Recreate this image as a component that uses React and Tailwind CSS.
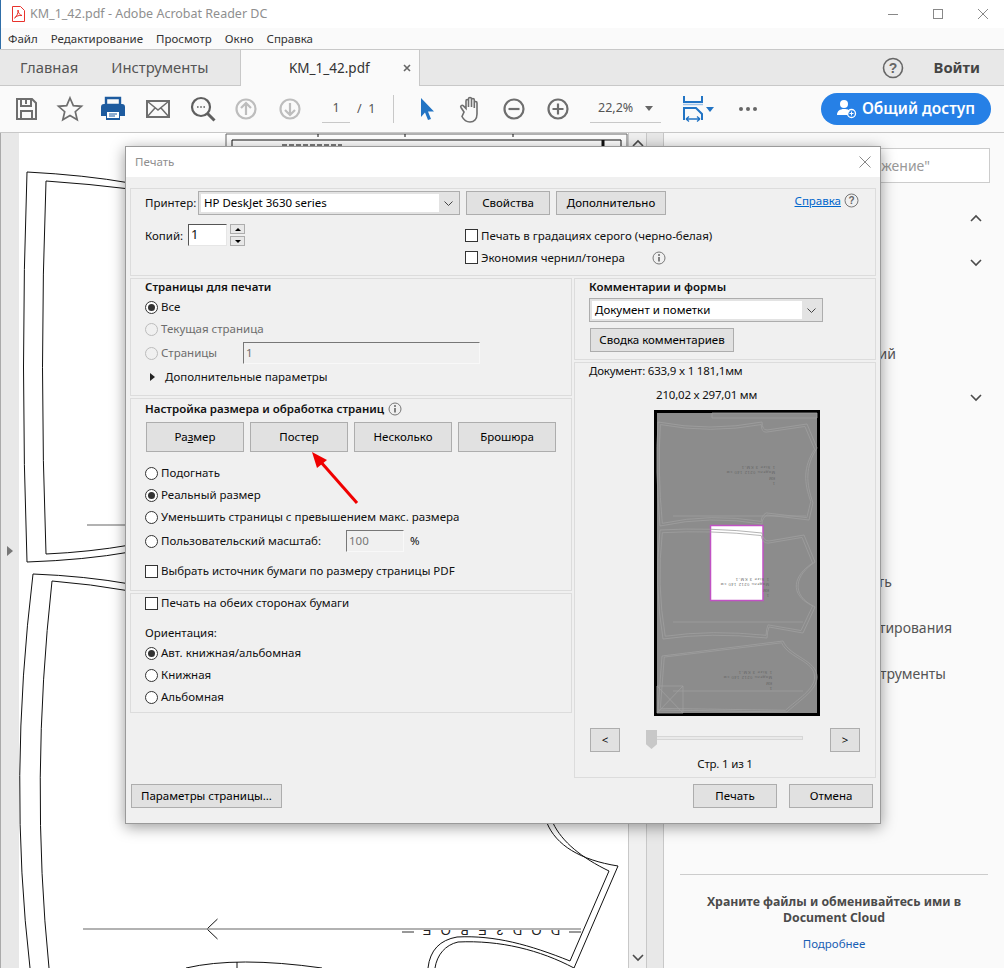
import React from 'react'

const Radio = ({ checked, disabled }) => (
    <span className={`flex h-[13px] w-[13px] shrink-0 items-center justify-center rounded-full border ${disabled ? 'border-[#bcbcbc] bg-[#f0f0f0]' : 'border-[#333] bg-white'}`}>
        {checked && <span className="h-[7px] w-[7px] rounded-full bg-[#333]" />}
    </span>
)

const Check = () => <span className="h-[13px] w-[13px] shrink-0 border border-[#333] bg-white" />

const Btn = ({ className = '', children }) => (
    <div className={`flex h-[24px] items-center justify-center border border-[#adadad] bg-[#e1e1e1] text-black ${className}`}>
        {children}
    </div>
)

const Row = ({ className = '', children }) => (
    <div className={`flex h-[22px] items-center gap-[3px] ${className}`}>{children}</div>
)

const Chevron = ({ className = '', up }) => (
    <svg width="12" height="8" viewBox="0 0 12 8" className={className}>
        <path d={up ? 'M1 7l5-5 5 5' : 'M1 1l5 5 5-5'} fill="none" stroke="#4b4b4b" strokeWidth="1.6" />
    </svg>
)

const Select = ({ value, className = '' }) => (
    <div className={`flex h-[24px] border border-[#adadad] bg-[#e3e3e3] p-[2px] ${className}`}>
        <div className="flex flex-1 items-center bg-white pl-[3px] text-black">{value}</div>
        <div className="flex w-[18px] items-center justify-center">
            <svg width="9" height="5" viewBox="0 0 9 5"><path d="M.5.5l4 4 4-4" fill="none" stroke="#444" /></svg>
        </div>
    </div>
)

const InfoIcon = ({ className = '' }) => (
    <svg width="14" height="14" viewBox="0 0 14 14" className={className}>
        <circle cx="7" cy="7" r="6" fill="none" stroke="#777" />
        <circle cx="7" cy="4" r="1" fill="#666" />
        <path d="M7 6v4.5" stroke="#666" strokeWidth="1.6" />
    </svg>
)

const ToolIcon = ({ children, w = 28, h = 28, className = '' }) => (
    <svg width={w} height={h} viewBox={`0 0 ${w} ${h}`} className={`shrink-0 ${className}`}>{children}</svg>
)

const Toolbar = () => (
    <div className="flex h-[47px] items-center border-b border-[#c8c8c8] bg-[#fafafa] pl-[12px] text-[12.5px] text-[#555]">
        <ToolIcon>
            <path d="M5 4h15l4 4v16H5z" fill="none" stroke="#6e6e6e" strokeWidth="2" />
            <path d="M9 4v7h10V4M9 24v-8h11v8M14 5v4" fill="none" stroke="#6e6e6e" strokeWidth="2" />
        </ToolIcon>
        <ToolIcon className="ml-[16px]">
            <path d="M14 3l3.3 7.6 8.2.7-6.2 5.4 1.9 8L14 20.5l-7.2 4.2 1.9-8-6.2-5.4 8.2-.7z" fill="none" stroke="#6e6e6e" strokeWidth="1.7" />
        </ToolIcon>
        <ToolIcon className="ml-[15px]">
            <path d="M7 3h14v7H7z" fill="none" stroke="#1d5b9f" strokeWidth="2.4" />
            <path d="M2 12a3 3 0 013-3h18a3 3 0 013 3v9h-5v4H7v-4H2z" fill="#1d5b9f" />
            <path d="M8 17h12v6H8z" fill="#fff" />
            <path d="M10 19h8M10 21h6" stroke="#1d5b9f" />
        </ToolIcon>
        <ToolIcon className="ml-[17px]">
            <path d="M3 6h22v16H3z" fill="none" stroke="#6e6e6e" strokeWidth="2" />
            <path d="M3 6l11 9 11-9M3 22l8-9M25 22l-8-9" fill="none" stroke="#6e6e6e" strokeWidth="1.5" />
        </ToolIcon>
        <ToolIcon className="ml-[17px]">
            <circle cx="12" cy="12" r="9" fill="none" stroke="#5f5f5f" strokeWidth="2.2" />
            <path d="M18.5 18.5l7 7" stroke="#5f5f5f" strokeWidth="3" />
            <path d="M8 12h1.6M11.2 12h1.6M14.4 12h1.6" stroke="#5f5f5f" strokeWidth="1.6" />
        </ToolIcon>
        <ToolIcon className="ml-[15px]">
            <circle cx="14" cy="14" r="9.5" fill="none" stroke="#bdbdbd" strokeWidth="2.2" />
            <path d="M14 20V8.5M9 13l5-5 5 5" fill="none" stroke="#bdbdbd" strokeWidth="2.2" />
        </ToolIcon>
        <ToolIcon className="ml-[16px]">
            <circle cx="14" cy="14" r="9.5" fill="none" stroke="#bdbdbd" strokeWidth="2.2" />
            <path d="M14 8v11.5M9 15l5 5 5-5" fill="none" stroke="#bdbdbd" strokeWidth="2.2" />
        </ToolIcon>
        <div className="ml-[18px] flex h-[28px] w-[28px] items-center justify-center border-b border-[#c8c8c8] text-[#555]">1</div>
        <div className="ml-[7px] w-[15px] whitespace-nowrap">/&nbsp;&nbsp;1</div>
        <div className="ml-[21px] h-[28px] w-px bg-[#c8c8c8]" />
        <ToolIcon w={20} className="ml-[23px]">
            <path d="M4 3l13 13.5h-6l3 7.5-3 1-3-7.5L4 22z" fill="#2274c4" />
        </ToolIcon>
        <ToolIcon className="ml-[20px]">
            <path d="M7 17l-3-4.5c-1-1.6 1-3 2.4-1.6L9 13.5V6c0-2 2.5-2 2.5 0v6-8c0-2 3-2 3 0v8-7c0-2 2.8-2 2.8 0v8-5c0-2 2.7-2 2.7 0v11c0 5-3 8-7 8-4 0-6-1.5-8-5.5z" fill="none" stroke="#6e6e6e" strokeWidth="1.6" />
        </ToolIcon>
        <ToolIcon className="ml-[15px]">
            <circle cx="14" cy="14" r="9.5" fill="none" stroke="#6e6e6e" strokeWidth="2.2" />
            <path d="M8.5 14h11" stroke="#6e6e6e" strokeWidth="2.2" />
        </ToolIcon>
        <ToolIcon className="ml-[16px]">
            <circle cx="14" cy="14" r="9.5" fill="none" stroke="#6e6e6e" strokeWidth="2.2" />
            <path d="M8.5 14h11M14 8.5v11" stroke="#6e6e6e" strokeWidth="2.2" />
        </ToolIcon>
        <div className="ml-[18px] flex h-[28px] w-[71px] items-center border-b border-[#c8c8c8] pl-[8px]">
            <span className="w-[47px]">22,2%</span>
            <span className="h-0 w-0 border-x-[4px] border-t-[5px] border-x-transparent border-t-[#666]" />
        </div>
        <ToolIcon w={24} className="ml-[20px]">
            <path d="M3 1v6h18V1" fill="none" stroke="#2274c4" strokeWidth="2" />
            <path d="M2 9.5h20" stroke="#9fc3e8" strokeWidth="1.5" />
            <path d="M3 25V13h12l6 6v6" fill="none" stroke="#2274c4" strokeWidth="2" />
            <path d="M5 24h14M5 24l3-2.5M5 24l3 2.5M19 24l-3-2.5M19 24l-3 2.5" fill="none" stroke="#2274c4" strokeWidth="1.3" />
        </ToolIcon>
        <span className="ml-[1px] h-0 w-0 border-x-[4px] border-t-[5px] border-x-transparent border-t-[#2274c4]" />
        <div className="ml-[25px] flex gap-[3px]">
            <span className="h-[4px] w-[4px] rounded-full bg-[#666]" />
            <span className="h-[4px] w-[4px] rounded-full bg-[#666]" />
            <span className="h-[4px] w-[4px] rounded-full bg-[#666]" />
        </div>
        <div className="ml-[64px] flex h-[32px] w-[170px] items-center justify-center gap-[5px] rounded-full bg-[#2680e6] text-[15.5px] font-semibold text-white">
            <svg width="20" height="20" viewBox="0 0 20 20">
                <circle cx="7" cy="5" r="4" fill="#fff" />
                <path d="M0 16c0-4 3-6 7-6s5 1 6 2a5 5 0 00-2 4z" fill="#fff" />
                <circle cx="14.5" cy="14.5" r="4" fill="none" stroke="#fff" strokeWidth="1.3" />
                <path d="M12.5 14.5h4M14.5 12.5v4" stroke="#fff" />
            </svg>
            <span>Общий доступ</span>
        </div>
    </div>
)

const PdfDrawing = () => (
    <svg viewBox="19 133 609 835" className="block h-full w-full">
        <defs>
            <clipPath id="labelClip"><rect x="390" y="930" width="195" height="12" /></clipPath>
        </defs>
        <g fill="none" stroke="#111" strokeWidth="1">
            <path d="M226 146V134H627V146" stroke="#666" />
            <path d="M318 134v3M405 134v3M513 134v3" />
            <path d="M232 146V140H621V146" />
            <path d="M603 140v6" strokeWidth="3" />
            <path d="M282 145h60" strokeWidth="1.5" strokeDasharray="5 2" stroke="#555" />
            <path d="M27 172Q85 175 130 183" />
            <path d="M27 172Q20 367 27 562" />
            <path d="M27 562Q85 560 130 552" />
            <path d="M46 181Q90 184 130 189" />
            <path d="M46 181Q39 367 46 554" />
            <path d="M46 554Q90 552 130 545" />
            <path d="M33 574Q85 576 130 584" />
            <path d="M33 574Q8 780 30 968" />
            <path d="M52 581Q90 584 130 591" />
            <path d="M52 581Q30 780 49 968" />
            <path d="M547 823C556 845 580 860 618 866L574 968" />
            <path d="M553 823C562 842 582 858 609 871L570 961C530 945 495 935 457 937C440 940 430 950 428 968" />
            <path d="M574 968C540 950 500 940 458 942C445 945 437 955 435 968" />
            <path d="M186 968Q237 956 322 968" />
            <path d="M237 962v6" />
            <path d="M217.5 919L207 929L217.5 939" />
        </g>
        <path d="M87 525H130M83 929H581" stroke="#999" strokeWidth="1.5" />
        <path d="M402 932h12M569 932h12" stroke="#777" strokeWidth="1.5" />
        <g clipPath="url(#labelClip)">
            <text transform="rotate(180 494 926)" x="414" y="926" fontSize="13" textLength="165" fontFamily="Liberation Sans, sans-serif" fill="#222">-DOD3EBOE-</text>
        </g>
    </svg>
)

const labelGroups = [
    { right: 775, top: 466 },
    { right: 769, top: 578 },
    { right: 772, top: 671 },
]

// pattern pieces of the preview page, drawn double as on the real sheet
const previewPieces = [
    { d: 'M658 422Q710 432 762 422Q762 430 767 430L807 424L817 448C805 467 806 483 813 503L809 520L767 515Q762 518 762 524Q710 515 660 526Q655 470 658 422z', cx: 737, cy: 473 },
    { d: 'M660 530Q710 527 762 533Q763 541 769 541L804 535L815 562C795 575 790 595 815 607L803 633L769 627Q767 632 767 638Q710 632 663 639Q654 585 660 530z', cx: 737, cy: 584 },
    { d: 'M783 641L662 656L658 710L787 712C800 700 817 690 817 677C817 660 790 657 783 641z', cx: 737, cy: 677 },
]

const PreviewDrawing = () => (
    <svg viewBox="654 410 166 306" className="block h-[306px] w-[166px]">
        <rect x="655.5" y="411.5" width="163" height="303" fill="#8c8c8c" stroke="#000" strokeWidth="3" />
        <rect x="710.5" y="525.5" width="52.5" height="75" fill="#fff" stroke="#c152c4" strokeWidth="1.5" />
        <g fill="none" stroke="#a0a0a0" strokeWidth="0.8">
            <path d="M712 413h105v5H712z" />
            {previewPieces.map((p) => (
                <g key={p.cy}>
                    <path d={p.d} />
                    <path d={p.d} transform={`translate(${p.cx} ${p.cy}) scale(0.97 0.95) translate(${-p.cx} ${-p.cy})`} />
                </g>
            ))}
            <path d="M673 622H803M673 691H803M673 516H806" />
            <path d="M657 686h26v27h-26zM657 686l26 27M683 686l-26 27" />
        </g>
        <g fill="#666" fontSize="4" fontFamily="Liberation Sans, sans-serif">
            {labelGroups.map((g) => (
                <g key={g.top}>
                    <text transform={`rotate(180 ${g.right} ${g.top})`} x={g.right} y={g.top} textLength="33">1 Size 3 KM-1</text>
                    <text transform={`rotate(180 ${g.right} ${g.top + 5})`} x={g.right} y={g.top + 5} textLength="48">Модель 0212 140 см</text>
                    <text transform={`rotate(180 ${g.right} ${g.top + 11})`} x={g.right} y={g.top + 11}>KM</text>
                    <text transform={`rotate(180 ${g.right} ${g.top + 16})`} x={g.right} y={g.top + 16}>1</text>
                </g>
            ))}
        </g>
    </svg>
)

const PrintDialog = () => (
    <div className="absolute left-[125px] top-[146px] flex h-[678px] w-[756px] flex-col border border-[#9a9a9a] bg-[#f0f0f0] text-[11.5px] text-[#111] shadow-[0_3px_14px_rgba(0,0,0,0.4)]">
        <div className="flex h-[30px] shrink-0 items-center justify-between bg-white pl-[9px] pr-[9px] text-[#8e8e8e]">
            <span>Печать</span>
            <svg width="12" height="12" viewBox="0 0 12 12"><path d="M.5.5l11 11M11.5.5l-11 11" stroke="#888" /></svg>
        </div>
        <div className="flex flex-1 flex-col px-[4px] pt-[11px]">
            {/* top block */}
            <div className="h-[88px] border border-[#dcdcdc] pl-[14px] pr-[16px] pt-[2px]">
                <div className="flex h-[24px] items-center">
                    <span className="w-[53px]">Принтер:</span>
                    <Select value="HP DeskJet 3630 series" className="w-[262px]" />
                    <Btn className="ml-[6px] w-[84px]">Свойства</Btn>
                    <Btn className="ml-[6px] w-[110px]">Дополнительно</Btn>
                    <div className="ml-auto flex items-center gap-[3px] self-start pt-[1px]">
                        <span className="text-[#0066cc] underline">Справка</span>
                        <svg width="15" height="15" viewBox="0 0 15 15">
                            <circle cx="7.5" cy="7.5" r="6.5" fill="none" stroke="#777" />
                            <text x="7.5" y="11" textAnchor="middle" fontSize="10" fontWeight="700" fill="#666" fontFamily="Liberation Sans, sans-serif">?</text>
                        </svg>
                    </div>
                </div>
                <div className="mt-[9px] flex">
                    <span className="w-[43px] pt-[3px]">Копий:</span>
                    <div className="flex h-[22px] w-[39px] items-center border border-[#e6e6e6] border-l-[#555] border-t-[#555] bg-white pl-[2px] text-[13px]">1</div>
                    <div className="ml-[3px] flex h-[22px] flex-col justify-between">
                        <span className="flex h-[10px] w-[15px] items-center justify-center border border-[#adadad] bg-[#e8e8e8]"><span className="h-0 w-0 border-x-[3px] border-b-[3px] border-x-transparent border-b-black" /></span>
                        <span className="flex h-[10px] w-[15px] items-center justify-center border border-[#adadad] bg-[#e8e8e8]"><span className="h-0 w-0 border-x-[3px] border-t-[3px] border-x-transparent border-t-black" /></span>
                    </div>
                    <div className="ml-[220px] flex flex-col gap-[9px] pt-[5px]">
                        <div className="flex h-[13px] items-center gap-[3px]"><Check /><span>Печать в градациях серого (черно-белая)</span></div>
                        <div className="flex h-[13px] items-center gap-[3px]"><Check /><span className="w-[168px]">Экономия чернил/тонера</span><InfoIcon /></div>
                    </div>
                </div>
            </div>

            <div className="mt-[2px] flex gap-[2px]">
                {/* left column */}
                <div className="flex w-[442px] flex-col">
                    <div className="h-[118px] border border-[#dcdcdc] pl-[14px]">
                        <div className="mb-[2px] flex h-[15px] items-center font-semibold">Страницы для печати</div>
                        <Row><Radio checked /><span>Все</span></Row>
                        <Row className="text-[#6d6d6d]"><Radio disabled /><span>Текущая страница</span></Row>
                        <Row className="mt-[2px] text-[#6d6d6d]">
                            <Radio disabled /><span className="w-[79px]">Страницы</span>
                            <div className="flex h-[22px] w-[237px] items-center border border-[#f8f8f8] border-l-[#777] border-t-[#777] pl-[2px]">1</div>
                        </Row>
                        <Row className="mt-[2px] gap-[10px] pl-[5px]">
                            <span className="h-0 w-0 border-y-[4px] border-l-[5px] border-y-transparent border-l-[#222]" />
                            <span>Дополнительные параметры</span>
                        </Row>
                    </div>
                    <div className="mt-[2px] h-[193px] border border-[#dcdcdc] pl-[14px]">
                        <div className="mb-[4px] flex h-[19px] items-center gap-[4px] font-semibold"><span>Настройка размера и обработка страниц</span><InfoIcon /></div>
                        <div className="flex gap-[6px] pl-px">
                            <Btn className="h-[30px] w-[98px]"><span>Ра<u>з</u>мер</span></Btn>
                            <Btn className="h-[30px] w-[98px]">Постер</Btn>
                            <Btn className="h-[30px] w-[98px]">Несколько</Btn>
                            <Btn className="h-[30px] w-[98px]">Брошюра</Btn>
                        </div>
                        <Row className="mt-[10px]"><Radio /><span>Подогнать</span></Row>
                        <Row><Radio checked /><span>Реальный размер</span></Row>
                        <Row><Radio /><span>Уменьшить страницы с превышением макс. размера</span></Row>
                        <Row className="mt-[2px]">
                            <Radio /><span className="w-[182px]">Пользовательский масштаб:</span>
                            <div className="flex h-[22px] w-[58px] items-center border border-[#f8f8f8] border-l-[#777] border-t-[#777] pl-[2px] text-[#777]">100</div>
                            <span className="ml-[3px]">%</span>
                        </Row>
                        <Row className="mt-[8px]"><Check /><span>Выбрать источник бумаги по размеру страницы PDF</span></Row>
                    </div>
                    <div className="mt-[2px] h-[120px] border border-[#dcdcdc] pl-[14px]">
                        <Row className="mt-[-2px]"><Check /><span>Печать на обеих сторонах бумаги</span></Row>
                        <div className="mt-[8px] flex h-[22px] items-center">Ориентация:</div>
                        <Row className="mt-[-2px]"><Radio checked /><span>Авт. книжная/альбомная</span></Row>
                        <Row><Radio /><span>Книжная</span></Row>
                        <Row><Radio /><span>Альбомная</span></Row>
                    </div>
                </div>
                {/* right column */}
                <div className="flex w-[302px] flex-col">
                    <div className="h-[82px] border border-[#dcdcdc] pl-[14px]">
                        <div className="mb-[4px] flex h-[15px] items-center font-semibold">Комментарии и формы</div>
                        <Select value="Документ и пометки" className="w-[234px]" />
                        <Btn className="ml-px mt-[6px] w-[144px]">Сводка комментариев</Btn>
                    </div>
                    <div className="mt-[2px] flex h-[416px] flex-col border border-[#dcdcdc] tracking-[-0.2px]">
                        <div className="mb-[2px] flex h-[15px] items-center pl-[14px]">Документ: 633,9 x 1 181,1мм</div>
                        <div className="flex h-[30px] items-center pl-[81px]">210,02 x 297,01 мм</div>
                        <div className="ml-[79px]"><PreviewDrawing /></div>
                        <div className="mt-[12px] flex items-center pl-[15px]">
                            <Btn className="w-[30px]">&lt;</Btn>
                            <div className="relative ml-[26px] h-[20px] w-[157px]">
                                <div className="absolute left-0 right-0 top-[6px] h-[4px] border border-[#d6d6d6] bg-[#e9e9e9]" />
                                <div className="absolute left-0 top-0 h-[19px] w-[11px] bg-[#c8c8c8] [clip-path:polygon(0_0,100%_0,100%_75%,50%_100%,0_75%)]" />
                            </div>
                            <Btn className="ml-[27px] w-[30px]">&gt;</Btn>
                        </div>
                        <div className="mt-[2px] flex h-[20px] items-center justify-center">Стр. 1 из 1</div>
                    </div>
                </div>
            </div>

            <div className="mt-[6px] flex pl-px">
                <Btn className="w-[151px]">Параметры страницы...</Btn>
                <Btn className="ml-auto w-[84px]">Печать</Btn>
                <Btn className="ml-[12px] mr-[3px] w-[84px]">Отмена</Btn>
            </div>
        </div>
        {/* red annotation arrow */}
        <svg width="60" height="60" viewBox="0 0 60 60" className="absolute left-[180px] top-[303px]">
            <path d="M51 53L14 11" stroke="#f00000" strokeWidth="3" />
            <path d="M6 2L21 10L11 18z" fill="#f00000" />
        </svg>
    </div>
)

const SidePanel = () => (
    <div className="flex flex-1 flex-col bg-[#fafafa] text-[14px] text-[#555]">
        <div className="ml-[16px] mt-[15px] flex h-[35px] w-[310px] items-center justify-end border border-[#ccc] bg-white pr-[59px] text-[#999]">
            Поиск "Отображение"
        </div>
        <div className="mt-[31px] flex justify-end pr-[22px]"><Chevron up /></div>
        <div className="mt-[37px] flex justify-end pr-[22px]"><Chevron /></div>
        <div className="mt-[76px] flex h-[20px] items-center justify-end pr-[108px]">Редактировать комментарий</div>
        <div className="mt-[31px] flex justify-end pr-[22px]"><Chevron /></div>
        <div className="mt-[169px] flex h-[20px] items-center justify-end pr-[112px]">Заполнить и подписать</div>
        <div className="mt-[26px] flex h-[20px] items-center justify-end pr-[52px]">Отправить на редактирования</div>
        <div className="mt-[26px] flex h-[20px] items-center justify-end pr-[58px]">Другие инструменты</div>
        <div className="mx-[16px] mt-[191px] border-t border-[#ccc] pt-[19px] text-center text-[12.3px] leading-[16px]">
            <div className="font-bold text-[#4b4b4b]">Храните файлы и обменивайтесь ими в<br />Document Cloud</div>
            <div className="mt-[10px] text-[11.5px] text-[#1a5fb4]">Подробнее</div>
        </div>
    </div>
)

export default function App() {
    return (
        <div className="relative flex h-[968px] w-[1004px] flex-col overflow-hidden bg-white font-['Noto_Sans',sans-serif]">
            <div className="flex h-[28px] shrink-0 items-center border-l border-[#2f6ea8] pl-[10px] text-[12.5px] text-[#8f8f8f]">
                <svg width="14" height="16" viewBox="0 0 14 16">
                    <path d="M1.5.5h8l4 4v11h-12z" fill="#fff" stroke="#e8322c" />
                    <path d="M3.5 12c2-1 4-5 3.5-8 0 3 2 5 4 5.5-3-.5-5.5.5-7.5 2.5z" fill="none" stroke="#e8322c" />
                </svg>
                <span className="ml-[5px]">KM_1_42.pdf - Adobe Acrobat Reader DC</span>
                <div className="ml-auto flex items-center gap-[35px] pr-[16px]">
                    <span className="h-px w-[10px] bg-[#888]" />
                    <span className="h-[10px] w-[10px] border border-[#888]" />
                    <svg width="10" height="10" viewBox="0 0 10 10"><path d="M0 0l10 10M10 0L0 10" stroke="#888" /></svg>
                </div>
            </div>
            <div className="flex h-[21px] shrink-0 items-center gap-[13px] border-l border-[#2f6ea8] bg-[#fafafa] pl-[7px] text-[11.5px] text-[#333]">
                <span>Файл</span><span>Редактирование</span><span>Просмотр</span><span>Окно</span><span>Справка</span>
            </div>
            <div className="flex h-[37px] shrink-0 border-y border-[#c8c8c8] bg-[#e8e8e8] text-[14.8px] text-[#555]">
                <div className="flex w-[240px] items-center gap-[33px] pl-[20px]"><span>Главная</span><span>Инструменты</span></div>
                <div className="relative -mb-px flex w-[180px] items-center border-x border-[#c8c8c8] bg-[#fafafa] pl-[48px] text-[13.5px] text-[#333]">
                    <span>KM_1_42.pdf</span>
                    <svg width="8" height="8" viewBox="0 0 8 8" className="ml-[33px]"><path d="M1 1l6 6M7 1L1 7" stroke="#666" strokeWidth="1.6" /></svg>
                </div>
                <div className="ml-auto flex items-center gap-[30px] pr-[24px]">
                    <svg width="22" height="22" viewBox="0 0 22 22">
                        <circle cx="11" cy="11" r="9.5" fill="none" stroke="#666" strokeWidth="1.6" />
                        <text x="11" y="16" textAnchor="middle" fontSize="14" fontWeight="700" fill="#666" fontFamily="Liberation Sans, sans-serif">?</text>
                    </svg>
                    <span className="font-bold text-[#444]">Войти</span>
                </div>
            </div>
            <Toolbar />
            <div className="flex min-h-0 flex-1">
                <div className="relative w-[19px] shrink-0 border-l border-[#aaa] bg-[#e8e8e8]">
                    <span className="absolute left-[6px] top-[413px] h-0 w-0 border-y-[5px] border-l-[6px] border-y-transparent border-l-[#777]" />
                </div>
                <div className="w-[609px] shrink-0 bg-white"><PdfDrawing /></div>
                <div className="flex w-[18px] shrink-0 flex-col items-center justify-between border-l border-[#c8c8c8] bg-[#f0f0f0] py-[6px]">
                    <Chevron up />
                    <Chevron />
                </div>
                <div className="w-[18px] shrink-0 border-x border-[#c8c8c8] bg-[#e8e8e8]" />
                <SidePanel />
            </div>
            <PrintDialog />
        </div>
    )
}
